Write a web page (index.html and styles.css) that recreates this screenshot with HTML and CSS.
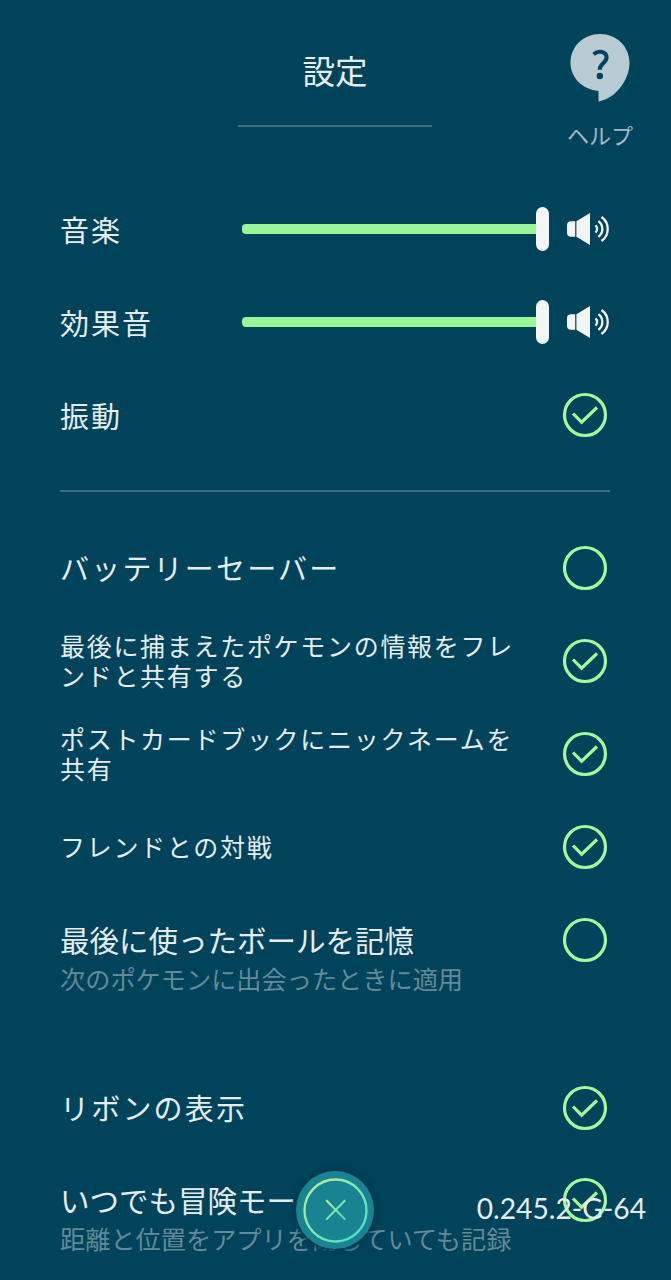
FILE: index.html
```html
<!DOCTYPE html>
<html lang="ja">
<head>
    <meta charset="utf-8">
    <title>設定</title>
    <link rel="stylesheet" href="styles.css">
</head>
<body>
<svg class="defs" width="0" height="0">
    <symbol id="on" viewBox="0 0 46 46">
        <circle cx="23" cy="23" r="20.5"/>
        <path d="M11 21.500l8.600 8.700L35 15.500"/>
    </symbol>
    <symbol id="off" viewBox="0 0 46 46">
        <circle cx="23" cy="23" r="20.5"/>
    </symbol>
    <symbol id="speaker" viewBox="0 0 44 34">
        <path d="M5 9.300h4.200v15.400H5a4 4 0 0 1-4-4v-7.400a4 4 0 0 1 4-4zM10.400 9.300L24 1v32L10.400 24.700z" fill="#f4f6f6"/>
        <g fill="none" stroke="#f4f6f6" stroke-width="2.300">
            <path d="M29.500 13.400a4.800 4.800 0 0 1 0 7.200"/>
            <path d="M32.400 9.200a9.700 9.700 0 0 1 0 15.600"/>
            <path d="M35.500 5a14.700 14.700 0 0 1 0 24"/>
        </g>
    </symbol>
</svg>

<header class="header">
    <h1>設定</h1>
    <a class="help">
        <svg width="60" height="68" viewBox="0 0 60 68">
            <path d="M30 0C46.500 0 59.500 12.500 59.500 29C59.500 46 45 65 28.500 67.500V57C12.500 55.500.500 43.500.500 29C.500 12.500 13.500 0 30 0z" fill="#b9cbd2"/>
            <path d="M23.600 20.200C28.500 16 36.600 17.200 36.600 23.600C36.600 29 29.700 29 29.700 35.800" fill="none" stroke="#00435b" stroke-width="4"/>
            <circle cx="29.800" cy="42" r="3.200" fill="#00435b"/>
        </svg>
        <span>ヘルプ</span>
    </a>
</header>

<main class="settings">
    <section class="group sound">
        <div class="row">
            <span class="label">音楽</span>
            <div class="slider"><div class="track"></div><div class="thumb"></div></div>
            <svg class="speaker"><use href="#speaker"/></svg>
        </div>
        <div class="row">
            <span class="label">効果音</span>
            <div class="slider"><div class="track"></div><div class="thumb"></div></div>
            <svg class="speaker"><use href="#speaker"/></svg>
        </div>
        <div class="row">
            <span class="label">振動</span>
            <svg class="check"><use href="#on"/></svg>
        </div>
    </section>

    <section class="group">
        <div class="row">
            <span class="label">バッテリーセーバー</span>
            <svg class="check"><use href="#off"/></svg>
        </div>
        <div class="row">
            <span class="label small">最後に捕まえたポケモンの情報をフレ<br>ンドと共有する</span>
            <svg class="check"><use href="#on"/></svg>
        </div>
        <div class="row">
            <span class="label small">ポストカードブックにニックネームを<br>共有</span>
            <svg class="check"><use href="#on"/></svg>
        </div>
        <div class="row">
            <span class="label small">フレンドとの対戦</span>
            <svg class="check"><use href="#on"/></svg>
        </div>
        <div class="row with-note">
            <div class="text">
                <span class="label tight">最後に使ったボールを記憶</span>
                <span class="note">次のポケモンに出会ったときに適用</span>
            </div>
            <svg class="check"><use href="#off"/></svg>
        </div>
        <div class="row">
            <span class="label">リボンの表示</span>
            <svg class="check"><use href="#on"/></svg>
        </div>
        <div class="row with-note">
            <div class="text">
                <span class="label tight">いつでも冒険モード</span>
                <span class="note">距離と位置をアプリを閉じていても記録</span>
            </div>
            <svg class="check"><use href="#on"/></svg>
        </div>
    </section>
</main>

<div class="version">0.245.2-G-64</div>

<button class="close" aria-label="閉じる">
    <svg width="78" height="78" viewBox="0 0 78 78">
        <defs>
            <linearGradient id="glow" gradientUnits="userSpaceOnUse" x1="14" y1="12" x2="64" y2="66">
                <stop offset="0" stop-color="#b4ef94"/>
                <stop offset="1" stop-color="#4de0cc"/>
            </linearGradient>
            <linearGradient id="glowX" gradientUnits="userSpaceOnUse" x1="29" y1="29" x2="49" y2="49">
                <stop offset="0" stop-color="#b4ef94"/>
                <stop offset="1" stop-color="#4de0cc"/>
            </linearGradient>
        </defs>
        <circle cx="39" cy="39" r="39" fill="#198391"/>
        <circle cx="39.500" cy="39.500" r="31" fill="none" stroke="url(#glow)" stroke-width="2.300"/>
        <path d="M30.200 29.200l19 19.400M49.200 29.200l-19 19.400" fill="none" stroke="url(#glowX)" stroke-width="2"/>
    </svg>
</button>
</body>
</html>
```

FILE: styles.css
```css
* {
    box-sizing: border-box;
}
body {
    margin: 0;
    height: 1280px;
    overflow: hidden;
    position: relative;
    background-color: #00435b;
    color: #e6edef;
    font-family: "Noto Sans CJK JP", sans-serif;
}
.defs {
    display: block;
}
.header {
    display: grid;
    grid-template-columns: 1fr 194px 1fr;
    height: 182px;
    padding: 0 1px 0 0;
}
h1 {
    grid-column: 2;
    height: 127px;
    margin: 0;
    padding-top: 46px;
    border-bottom: 2px solid #3a6d7f;
    font-size: 32.5px;
    font-weight: 400;
    line-height: 48px;
    text-align: center;
}
.help {
    display: flex;
    flex-direction: column;
    align-items: center;
    justify-self: end;
    padding: 34px 37px 0 0;
    color: #a3bac3;
    font-size: 22px;
    line-height: 30px;
}
.help span {
    margin-top: 17px;
}
.settings {
    padding: 0 61px 0 60px;
}
.group + .group {
    margin-top: 29px;
    padding-top: 29px;
    border-top: 2px solid #3a6d7f;
}
.row {
    display: flex;
    align-items: center;
    height: 93px;
}
.label {
    flex: 1;
    padding-bottom: 2px;
    font-size: 29px;
    letter-spacing: 2.2px;
    line-height: 44px;
    white-space: nowrap;
}
.sound .label {
    padding-bottom: 0;
    letter-spacing: 2px;
}
.label.small {
    padding-bottom: 1px;
    font-size: 25px;
    letter-spacing: 1.7px;
    line-height: 30.5px;
}
.slider {
    display: flex;
    align-items: center;
    width: 307px;
    margin-right: 17px;
}
.track {
    flex: 1;
    height: 10px;
    border-radius: 4px 0 0 4px;
    background-color: #98f796;
}
.thumb {
    width: 13px;
    height: 44px;
    border-radius: 6.5px;
    background-color: #f4f6f6;
}
.speaker {
    width: 44px;
    height: 34px;
}
.check {
    width: 46px;
    height: 46px;
    margin-right: 2px;
    fill: none;
    stroke: #a5f99b;
    stroke-width: 3.2;
}
.with-note {
    align-items: flex-start;
    height: 168px;
    padding-top: 23px;
}
.with-note .check {
    margin-top: 1px;
}
.with-note ~ .with-note {
    height: 93px;
    padding-top: 22px;
}
.text {
    flex: 1;
    display: flex;
    flex-direction: column;
}
.label.tight {
    flex: none;
    padding: 2px 0 1px;
    font-size: 29.5px;
    letter-spacing: 0;
    line-height: 42px;
}
.note {
    color: #648998;
    font-size: 25.2px;
    line-height: 34px;
    white-space: nowrap;
}
.version {
    position: absolute;
    right: 25px;
    bottom: 55px;
    color: #e6edef;
    font-family: Lato, sans-serif;
    font-size: 28.2px;
    line-height: 34px;
}
.close {
    position: absolute;
    left: 296px;
    bottom: 31px;
    width: 78px;
    height: 78px;
    padding: 0;
    border: none;
    border-radius: 50%;
    background: none;
    box-shadow: 0 0 4px 3px #003b52;
}
.close svg {
    display: block;
}
```
